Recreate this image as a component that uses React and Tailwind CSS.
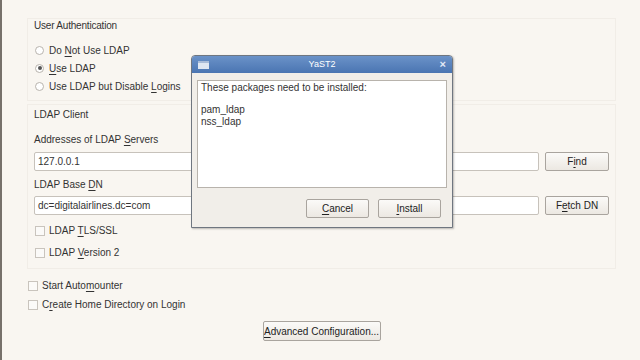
import React from "react";

const U = ({ children }) => <span className="underline underline-offset-2">{children}</span>;

function Radio({ checked, children }) {
    return (
        <div className="flex items-center h-[18px]">
            <span className="w-[9px] h-[9px] rounded-full border border-[#b9b4ad] bg-white flex items-center justify-center">
                {checked && <span className="w-[4px] h-[4px] rounded-full bg-[#555]" />}
            </span>
            <span className="ml-[5px]">{children}</span>
        </div>
    );
}

function Check({ children, className = "" }) {
    return (
        <div className={"flex items-center " + className}>
            <span className="w-[10px] h-[10px] border border-[#c9c4bd] bg-[#fbfaf8]" />
            <span className="ml-[4px]">{children}</span>
        </div>
    );
}

function Btn({ children, className = "" }) {
    return (
        <button className={"h-[19px] border border-[#a9a49e] rounded-[2px] bg-gradient-to-b from-[#fbfaf8] to-[#ece8e2] text-[#222] flex items-center justify-center " + className}>
            {children}
        </button>
    );
}

export default function App() {
    return (
        <div
            className="relative w-[640px] h-[360px] overflow-hidden bg-[#f9f6f1] border-l-2 border-[#77716b] text-[10px] text-[#333]"
            style={{ fontFamily: '"Liberation Sans", Arial, sans-serif' }}
        >
            <div className="pl-[25px] pr-[24px] pt-[18px]">
                {/* User Authentication */}
                <div className="border border-[#f1ede7] px-[6px] pt-[1px] pb-[6px] h-[83px]">
                    <div className="leading-[12px] tracking-[-0.2px]">User Authentication</div>
                    <div className="mt-[9px] pl-[1px]">
                        <Radio>Do <U>N</U>ot Use LDAP</Radio>
                        <Radio checked><U>U</U>se LDAP</Radio>
                        <Radio>Use LDAP but Disable <U>L</U>ogins</Radio>
                    </div>
                </div>

                {/* LDAP Client */}
                <div className="mt-[3px] border border-[#f1ede7] px-[6px] pt-[4px] h-[165px]">
                    <div className="leading-[12px]">LDAP Client</div>
                    <div className="mt-[13px] leading-[12px]">Addresses of LDAP <U>S</U>ervers</div>
                    <div className="flex items-center mt-[6px]">
                        <div className="w-[505px] h-[19px] border border-[#c7c2bb] rounded-[2px] bg-white flex items-center px-[3px]">127.0.0.1</div>
                        <Btn className="ml-[6px] w-[64px]">F<U>i</U>nd</Btn>
                    </div>
                    <div className="mt-[8px] leading-[12px]">LDAP Base <U>D</U>N</div>
                    <div className="flex items-center mt-[5px]">
                        <div className="w-[505px] h-[19px] border border-[#c7c2bb] rounded-[2px] bg-white flex items-center px-[3px]">dc=digitalairlines.dc=com</div>
                        <Btn className="ml-[6px] w-[64px]">F<U>e</U>tch DN</Btn>
                    </div>
                    <Check className="mt-[8px] pl-[1px]">LDAP <U>T</U>LS/SSL</Check>
                    <Check className="mt-[7px] pl-[1px]">LDAP <U>V</U>ersion 2</Check>
                </div>

                <Check className="mt-[9px] pl-[1px]">Start Auto<U>m</U>ounter</Check>
                <Check className="mt-[4px] pl-[1px]">C<U>r</U>eate Home Directory on Login</Check>

                <div className="flex justify-center mt-[9px]">
                    <Btn className="w-[118px] h-[20px]"><U>A</U>dvanced Configuration...</Btn>
                </div>
            </div>

            {/* YaST2 dialog */}
            <div className="absolute left-[189px] top-[55px] w-[262px] h-[173px] border border-[#6f7680] rounded-t-[4px] bg-[#f1eee9] shadow-[1px_1px_2px_rgba(0,0,0,0.25)] flex flex-col">
                <div className="h-[17px] rounded-t-[3px] bg-gradient-to-b from-[#6b92c8] to-[#4a75b2] flex items-center px-[6px] relative">
                    <span className="w-[11px] h-[8px] bg-[#dfe7f2] border-t-[2px] border-[#a9bcd8]" />
                    <span className="absolute left-0 right-0 text-center text-white text-[9px]">YaST2</span>
                    <span className="ml-auto text-[#e3ebf6] text-[11px] leading-none font-bold">×</span>
                </div>
                <div className="mx-[5px] mt-[7px] h-[108px] border border-[#b8b3ac] bg-white px-[3px] pt-[1px] leading-[12px]">
                    <div>These packages need to be installed:</div>
                    <div className="mt-[10px]">pam_ldap</div>
                    <div>nss_ldap</div>
                </div>
                <div className="flex justify-end mt-[11px] pr-[11px] gap-[9px]">
                    <Btn className="w-[63px]"><U>C</U>ancel</Btn>
                    <Btn className="w-[63px] border-[#555]"><U>I</U>nstall</Btn>
                </div>
            </div>
        </div>
    );
}
